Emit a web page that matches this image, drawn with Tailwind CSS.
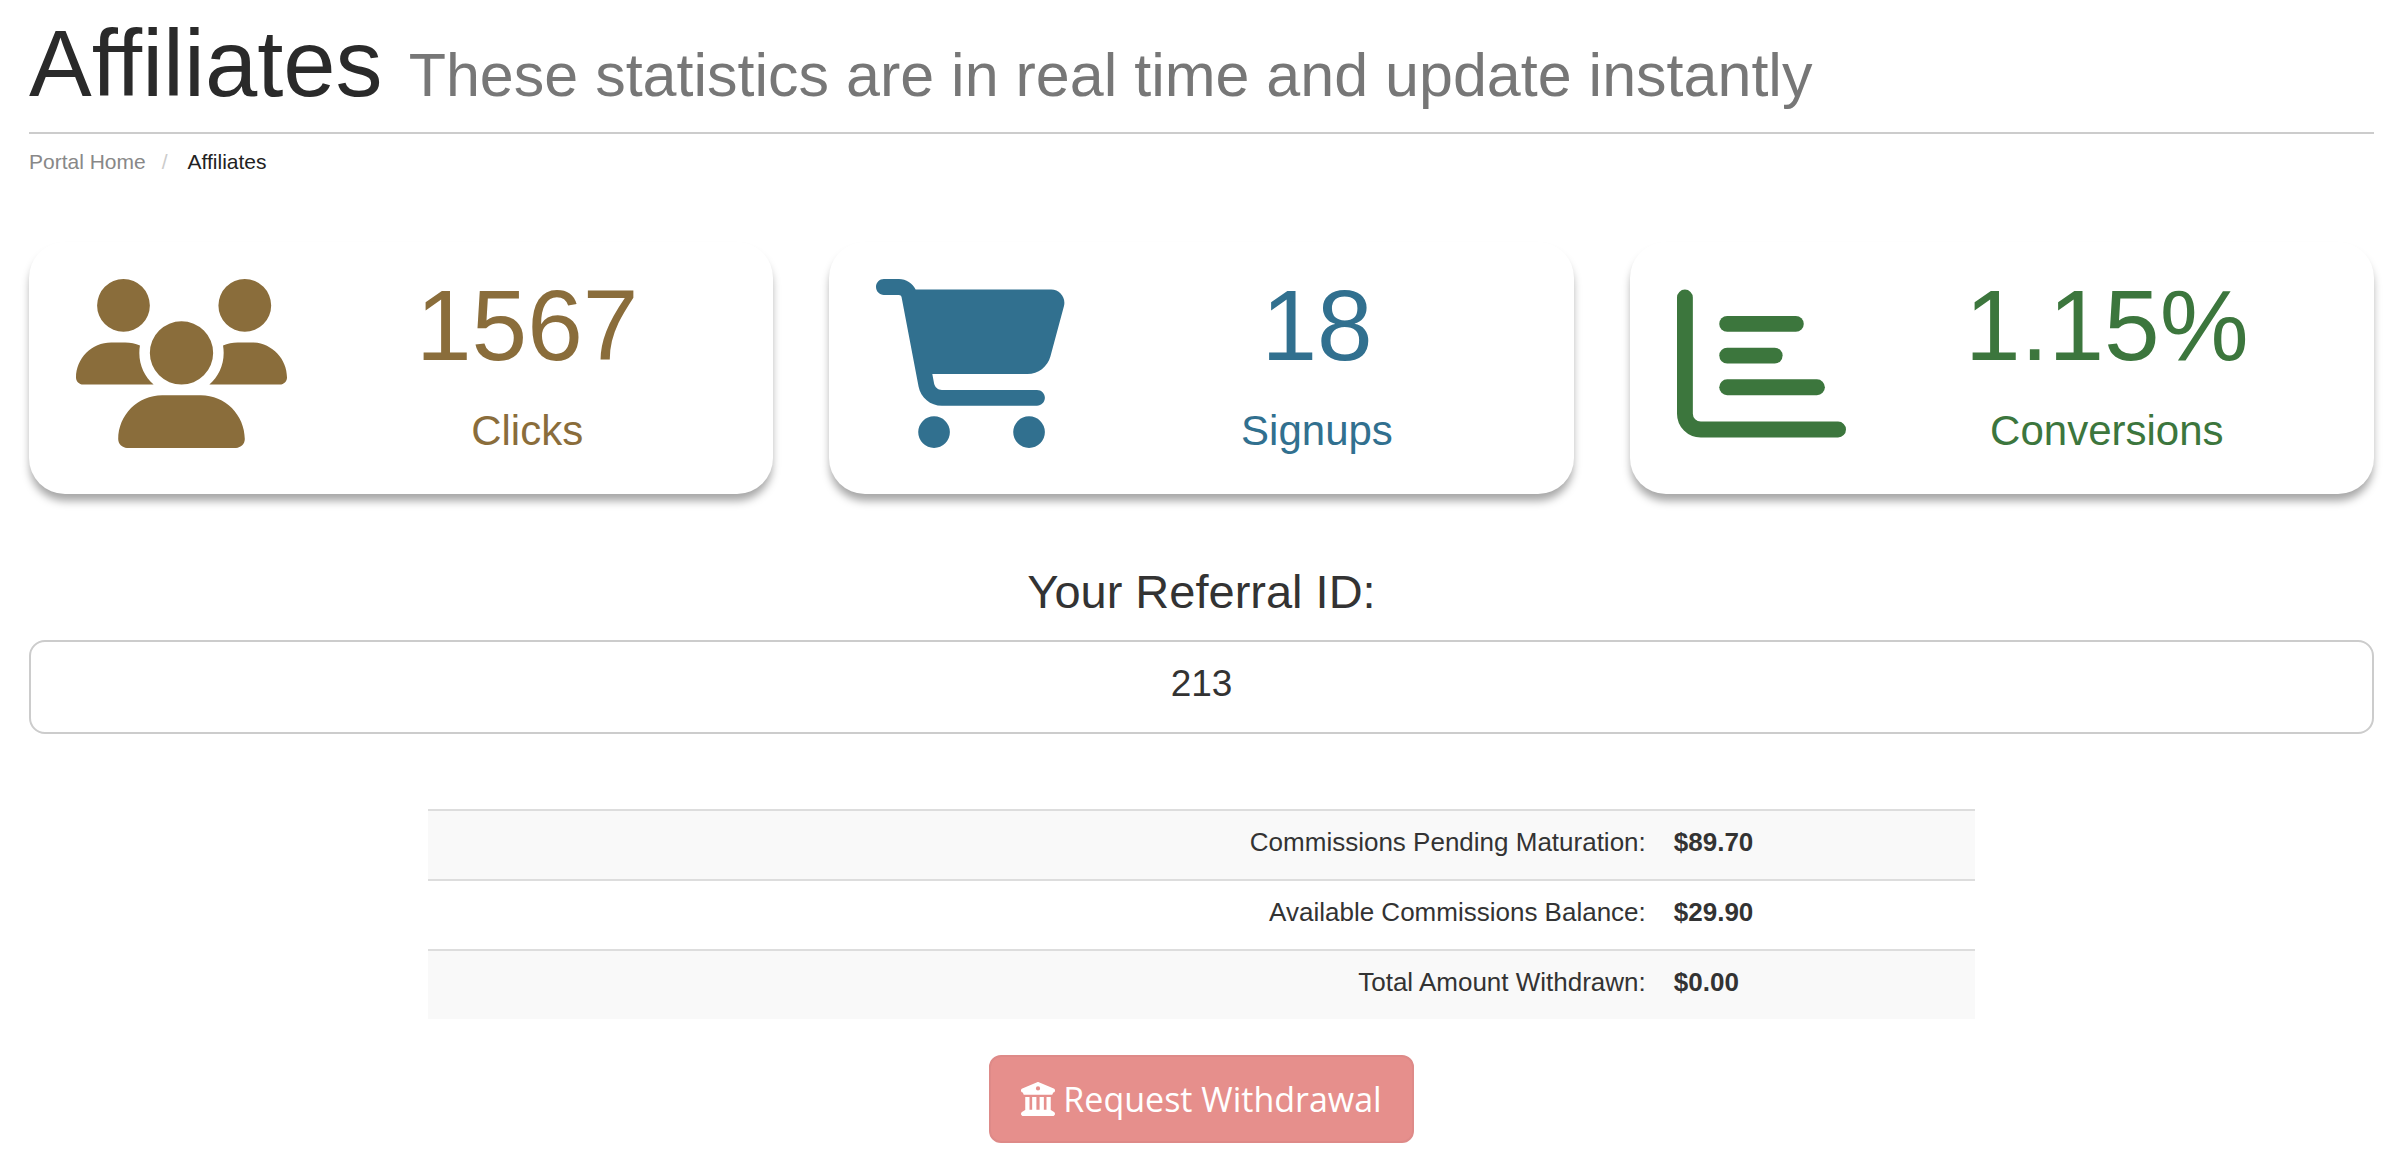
<!DOCTYPE html>
<html lang="en">
<head>
    <meta charset="utf-8">
    <meta name="viewport" content="width=device-width, initial-scale=1">
    <title>Affiliates</title>
    <script src="https://cdn.jsdelivr.net/npm/@tailwindcss/browser@4"></script>
</head>
<body class="bg-white pl-[29px] pr-[26px] font-['Liberation_Sans',Arial,sans-serif] text-[#333] overflow-x-hidden">
    <header class="border-b-2 border-[#ccc] pt-2.5 pb-3.5">
        <h1 class="text-[94px] leading-[108px] text-[#2a2a2a]">Affiliates
            <small class="text-[61px] leading-none text-[#777]">These statistics are in real time and update instantly</small>
        </h1>
    </header>
    <nav aria-label="Breadcrumb" class="pt-3.5 text-[21px] leading-7">
        <ol class="flex">
            <li><a href="#" class="text-[#888]">Portal Home</a></li>
            <li class="pl-4 pr-5 text-[#ccc]" aria-hidden="true">/</li>
            <li class="text-[#222]">Affiliates</li>
        </ol>
    </nav>

    <main>
        <section class="mt-[66px] grid grid-cols-3 gap-14">
            <div class="flex items-center rounded-[36px] pl-[47px] pr-1.5 pb-2.5 h-[252px] bg-white shadow-[0_8px_8px_-1px_rgba(0,0,0,0.35)] text-[#8a6d3b]">
                <svg class="h-[169px] w-[211px] shrink-0 fill-current" viewBox="0 0 640 512" aria-hidden="true">
                    <path d="M144 0a80 80 0 1 1 0 160A80 80 0 1 1 144 0zM512 0a80 80 0 1 1 0 160A80 80 0 1 1 512 0zM0 298.7C0 239.8 47.8 192 106.7 192h42.7c15.9 0 31 3.5 44.6 9.7c-1.3 7.2-1.9 14.7-1.9 22.3c0 38.2 16.8 72.5 43.3 96c-.2 0-.4 0-.7 0H21.3C9.6 320 0 310.4 0 298.7zM405.3 320c-.2 0-.4 0-.7 0c26.6-23.5 43.3-57.8 43.3-96c0-7.6-.7-15-1.9-22.3c13.6-6.3 28.7-9.7 44.6-9.7h42.7C592.2 192 640 239.8 640 298.7c0 11.8-9.6 21.3-21.3 21.3H405.3zM224 224a96 96 0 1 1 192 0 96 96 0 1 1 -192 0zM128 485.3C128 411.7 187.7 352 261.3 352H378.7C452.3 352 512 411.7 512 485.3c0 14.7-11.9 26.7-26.7 26.7H154.7c-14.7 0-26.7-11.9-26.7-26.7z" />
                </svg>
                <div class="flex-1 text-center">
                    <div class="text-[100px] leading-[120px]">1567</div>
                    <div class="mt-4 text-[42px] leading-[60px]">Clicks</div>
                </div>
            </div>
            <div class="flex items-center rounded-[36px] pl-[47px] pr-1.5 pb-2.5 h-[252px] bg-white shadow-[0_8px_8px_-1px_rgba(0,0,0,0.35)] text-[#31708f]">
                <svg class="h-[169px] w-[190px] shrink-0 fill-current" viewBox="0 0 576 512" aria-hidden="true">
                    <path d="M0 24C0 10.7 10.7 0 24 0H69.5c22 0 41.5 12.8 50.6 32h411c26.3 0 45.5 25 38.6 50.4l-41 152.3c-8.5 31.4-37 53.3-69.5 53.3H170.7l5.4 28.5c2.2 11.3 12.1 19.5 23.6 19.5H488c13.3 0 24 10.7 24 24s-10.7 24-24 24H199.7c-34.6 0-64.3-24.6-70.7-58.5L77.4 54.5c-.7-3.8-4-6.5-7.9-6.5H24C10.7 48 0 37.3 0 24zM128 464a48 48 0 1 1 96 0 48 48 0 1 1 -96 0zm336-48a48 48 0 1 1 0 96 48 48 0 1 1 0-96z" />
                </svg>
                <div class="flex-1 text-center">
                    <div class="text-[100px] leading-[120px]">18</div>
                    <div class="mt-4 text-[42px] leading-[60px]">Signups</div>
                </div>
            </div>
            <div class="flex items-center rounded-[36px] pl-[47px] pr-1.5 pb-2.5 h-[252px] bg-white shadow-[0_8px_8px_-1px_rgba(0,0,0,0.35)] text-[#3c763d]">
                <svg class="h-[169px] w-[169px] shrink-0" viewBox="0 0 512 512" fill="none" stroke="currentColor" stroke-width="48" stroke-linecap="round" aria-hidden="true">
                    <path d="M24 56V408c0 26.5 21.5 48 48 48H488" />
                    <path d="M152 136H360" />
                    <path d="M152 232H296" />
                    <path d="M152 328H424" />
                </svg>
                <div class="flex-1 text-center">
                    <div class="text-[100px] leading-[120px]">1.15%</div>
                    <div class="mt-4 text-[42px] leading-[60px]">Conversions</div>
                </div>
            </div>
        </section>

        <section class="mt-16 text-center">
            <label for="referral" class="block text-[47px] leading-[68px]">Your Referral ID:</label>
            <input id="referral" type="text" readonly value="213"
                class="mt-3.5 block w-full h-[94px] rounded-2xl border-2 border-[#ccc] pb-1.5 text-center text-[37px] outline-0">
        </section>

        <table class="mx-auto mt-[75px] w-[66%] text-[26px] leading-10">
            <tbody>
                <tr class="h-[70px] border-t-2 border-[#ddd] bg-[#f9f9f9]">
                    <th scope="row" class="w-4/5 pr-5 pb-1.5 text-right font-normal">Commissions Pending Maturation:</th>
                    <td class="pl-2 pb-1.5 font-bold">$89.70</td>
                </tr>
                <tr class="h-[70px] border-t-2 border-[#ddd]">
                    <th scope="row" class="w-4/5 pr-5 pb-1.5 text-right font-normal">Available Commissions Balance:</th>
                    <td class="pl-2 pb-1.5 font-bold">$29.90</td>
                </tr>
                <tr class="h-[69px] border-t-2 border-[#ddd] bg-[#f9f9f9]">
                    <th scope="row" class="w-4/5 pr-5 pb-1.5 text-right font-normal">Total Amount Withdrawn:</th>
                    <td class="pl-2 pb-1.5 font-bold">$0.00</td>
                </tr>
            </tbody>
        </table>

        <button type="button" disabled
            class="mx-auto mt-9 flex h-[88px] items-center gap-2 rounded-xl border-2 border-[#de8a88] bg-[#e68f8c] px-[30px] font-['Open_Sans',sans-serif] text-[34px] text-white">
            <svg class="h-[34px] w-[34px] fill-current" viewBox="0 0 512 512" aria-hidden="true">
                <path fill-rule="evenodd" d="M243.4 2.6l-224 96c-14 6-21.8 21-18.7 35.8S16.8 160 32 160v8c0 13.3 10.7 24 24 24H456c13.3 0 24-10.7 24-24v-8c15.2 0 28.3-10.7 31.3-25.6s-4.8-29.9-18.7-35.8l-224-96c-8-3.4-17.2-3.4-25.2 0zM256 64a32 32 0 1 1 0 64 32 32 0 1 1 0-64z" />
                <path d="M128 224H64V420.300c-.6 .3-1.200 .7-1.800 1.100l-48 32c-11.700 7.800-17 22.400-12.900 35.900S17.900 512 32 512H480c14.100 0 26.500-9.200 30.600-22.700s-1.100-28.100-12.900-35.900l-48-32c-.6-.4-1.200-.7-1.800-1.100V224H384V416H344V224H280V416H232V224H168V416H128V224z" />
            </svg>
            Request Withdrawal
        </button>
    </main>
</body>
</html>
